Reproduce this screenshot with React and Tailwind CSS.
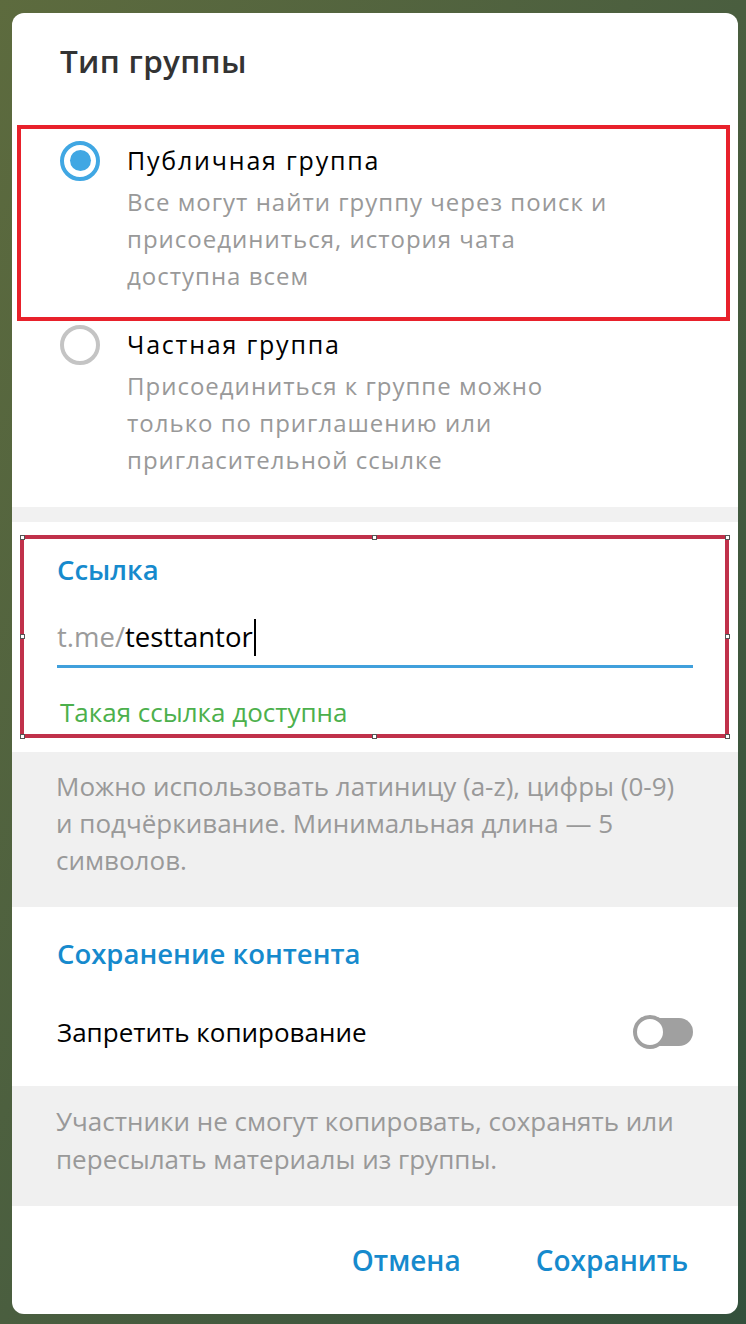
import React from "react";

const font = { fontFamily: '"Open Sans", "Noto Sans", sans-serif' };

function Radio({ checked }) {
  return checked ? (
    <div className="flex h-[40px] w-[40px] shrink-0 items-center justify-center rounded-full border-[4px] border-[#40a7e3]">
      <div className="h-[21px] w-[21px] rounded-full bg-[#40a7e3]" />
    </div>
  ) : (
    <div className="h-[40px] w-[40px] shrink-0 rounded-full border-[4px] border-[#c4c4c4]" />
  );
}

function Option({ checked, label, lines }) {
  return (
    <div className="flex items-start pl-[48px]">
      <div className="flex h-[37px] items-center">
        <Radio checked={checked} />
      </div>
      <div className="ml-[27px]">
        <div className="text-[25px] leading-[37px] tracking-[1.8px] text-black">
          {label}
        </div>
        <div className="mt-[4px] text-[24px] leading-[37px] tracking-[1px] text-[#999999]">
          {lines.map((l) => (
            <div key={l}>{l}</div>
          ))}
        </div>
      </div>
    </div>
  );
}

function Handle({ className }) {
  return (
    <div
      className={
        "absolute h-[5px] w-[5px] border border-[#555] bg-white " + className
      }
    />
  );
}

export default function App() {
  return (
    <div
      className="min-h-screen w-full bg-linear-to-br from-[#5d6b3e] via-[#4a5e3f] to-[#33503c] pl-[12px] pr-[8px] pt-[13px] pb-[10px]"
      style={font}
    >
      <div className="flex h-[1301px] w-[726px] flex-col overflow-hidden rounded-[12px] bg-white">
        {/* title */}
        <div className="px-[48px] pt-[28px] text-[31.5px] font-semibold leading-[40px] tracking-[0.3px] text-[#333333]">
          Тип группы
        </div>

        {/* group type options */}
        <div className="flex flex-col gap-[32px] pb-[29px] pt-[61px]">
          <div className="relative">
            <div className="pointer-events-none absolute bottom-[-27px] left-[5px] right-[8px] top-[-17px] border-[4px] border-[#e8212b]" />
            <Option
              checked
              label="Публичная группа"
              lines={[
                "Все могут найти группу через поиск и",
                "присоединиться, история чата",
                "доступна всем",
              ]}
            />
          </div>
          <Option
            label="Частная группа"
            lines={[
              "Присоединиться к группе можно",
              "только по приглашению или",
              "пригласительной ссылке",
            ]}
          />
        </div>

        <div className="h-[15px] bg-[#f1f1f1]" />

        {/* link section */}
        <div className="relative px-[45px] pb-[24px] pt-[30px]">
          <div className="pointer-events-none absolute bottom-[14px] left-[8px] right-[9px] top-[13px] border-[4px] border-[#c0314a]">
            <div className="absolute inset-[0.5px] border border-dashed border-white" />
            <Handle className="left-[-4.5px] top-[-4.5px]" />
            <Handle className="right-[-4.5px] top-[-4.5px]" />
            <Handle className="bottom-[-4.5px] left-[-4.5px]" />
            <Handle className="bottom-[-4.5px] right-[-4.5px]" />
            <Handle className="left-[-4.5px] top-[calc(50%-2.5px)]" />
            <Handle className="right-[-4.5px] top-[calc(50%-2.5px)]" />
            <Handle className="left-[calc(50%-2.5px)] top-[-4.5px]" />
            <Handle className="bottom-[-4.5px] left-[calc(50%-2.5px)]" />
          </div>
          <div className="text-[27.5px] font-semibold leading-[36px] text-[#168acd]">
            Ссылка
          </div>
          <div className="mt-[30px] flex items-center text-[27.5px] leading-[38px]">
            <span className="text-[#9b9b9b]">t.me/</span>
            <span className="text-black">testtantor</span>
            <span className="ml-[1px] h-[37px] w-[2px] bg-black" />
          </div>
          <div className="mt-[9px] h-[3px] bg-[#40a0dc]" />
          <div className="mt-[28px] pl-[3px] text-[26px] leading-[32px] text-[#4cb04c]">
            Такая ссылка доступна
          </div>
        </div>

        {/* hint */}
        <div className="bg-[#f0f0f0] px-[44px] pb-[28px] pt-[16px] text-[26px] leading-[37px] text-[#999999]">
          <div>Можно использовать латиницу (a-z), цифры (0-9)</div>
          <div>и подчёркивание. Минимальная длина — 5</div>
          <div>символов.</div>
        </div>

        {/* content protection */}
        <div className="px-[45px] pb-[36px] pt-[29px]">
          <div className="text-[27.5px] font-semibold leading-[36px] text-[#168acd]">
            Сохранение контента
          </div>
          <div className="mt-[42px] flex items-center justify-between">
            <div className="text-[26px] leading-[36px] text-black">
              Запретить копирование
            </div>
            <div className="relative mr-[-1px] flex h-[34px] w-[61px] items-center">
              <div className="ml-[12px] h-[28px] w-[48px] rounded-full bg-[#a0a0a0]" />
              <div className="absolute left-0 top-0 h-[34px] w-[34px] rounded-full border-[4px] border-[#a0a0a0] bg-white" />
            </div>
          </div>
        </div>

        {/* protection hint */}
        <div className="bg-[#f0f0f0] px-[44px] pb-[28px] pt-[16px] text-[26px] leading-[38px] text-[#999999]">
          <div>Участники не смогут копировать, сохранять или</div>
          <div>пересылать материалы из группы.</div>
        </div>

        {/* footer buttons */}
        <div className="flex flex-1 items-center justify-end gap-[75px] pr-[50px]">
          <button className="text-[28px] font-semibold leading-[36px] text-[#168acd]">
            Отмена
          </button>
          <button className="text-[28px] font-semibold leading-[36px] text-[#168acd]">
            Сохранить
          </button>
        </div>
      </div>
    </div>
  );
}
